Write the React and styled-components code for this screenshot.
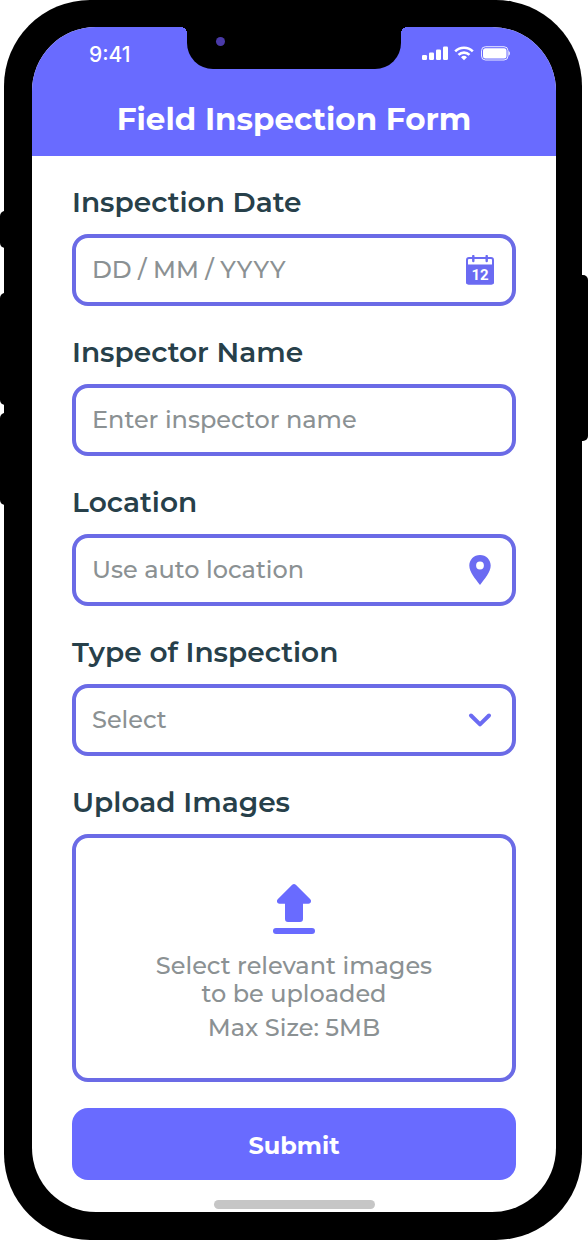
import React, { useState } from "react";
import styled, { createGlobalStyle } from "styled-components";

const GlobalStyle = createGlobalStyle`
  * {
    box-sizing: border-box;
  }
  body {
    margin: 0;
    background: #fff;
    font-family: Montserrat, Inter, sans-serif;
  }
`;

const Device = styled.div`
  position: relative;
  padding: 0 6px 0 4px;
`;

const SideButton = styled.span`
  position: absolute;
  width: 12px;
  top: ${(props) => props.$top}px;
  height: ${(props) => props.$height}px;
  ${(props) => props.$side}: 0;
  border-radius: 5px;
  background: #000;
`;

const Bezel = styled.div`
  position: relative;
  padding: 27px 26px 28px 28px;
  border-radius: 86px;
  background: #000;
`;

const Screen = styled.main`
  position: relative;
  overflow: hidden;
  border-radius: 64px;
  background: #fff;
`;

const Notch = styled.div`
  position: absolute;
  top: 0;
  left: 50%;
  width: 214px;
  height: 42px;
  margin-left: -107px;
  border-radius: 0 0 26px 26px;
  background: #000;
  &:before,
  &:after {
    content: "";
    position: absolute;
    top: 0;
    width: 6px;
    height: 6px;
  }
  &:before {
    right: 100%;
    background: radial-gradient(circle at 0 100%, transparent 6px, #000 6px);
  }
  &:after {
    left: 100%;
    background: radial-gradient(circle at 100% 100%, transparent 6px, #000 6px);
  }
`;

const Camera = styled.span`
  position: absolute;
  top: 10px;
  left: 29px;
  width: 9px;
  height: 9px;
  border-radius: 50%;
  background: #4a3aa8;
`;

const Header = styled.header`
  padding-bottom: 17px;
  background: #696bff;
  color: #fff;
  h1 {
    margin: 0;
    font-size: 31px;
    line-height: 40px;
    font-weight: 700;
    text-align: center;
  }
`;

const StatusBar = styled.div`
  display: flex;
  justify-content: space-between;
  align-items: flex-start;
  height: 72px;
  padding: 16px 46px 0 57px;
  time {
    font-family: Inter, sans-serif;
    font-size: 21px;
    line-height: 24px;
    font-weight: 500;
  }
`;

const StatusIcons = styled.div`
  display: flex;
  gap: 6px;
  padding-top: 3px;
`;

const Form = styled.form`
  display: flex;
  flex-direction: column;
  gap: 30px;
  padding: 30px 40px 20px;
`;

const Field = styled.div`
  display: flex;
  flex-direction: column;
  gap: 16px;
`;

const Label = styled.label`
  color: #27404a;
  font-size: 28px;
  line-height: 32px;
  font-weight: 600;
`;

const Box = styled.div`
  display: flex;
  align-items: center;
  height: 72px;
  padding: 0 18px 0 16px;
  border: 4px solid #6b6be6;
  border-radius: 16px;
  color: #6b6bf2;
  input,
  select {
    flex: 1;
    min-width: 0;
    height: 100%;
    padding: 0 0 2px;
    border: none;
    outline: none;
    appearance: none;
    background: none;
    color: #8b9193;
    font-family: inherit;
    font-size: 24px;
    font-weight: 500;
  }
  input::placeholder {
    color: #8b9193;
    opacity: 1;
  }
  svg {
    flex: none;
    display: block;
  }
`;

const IconButton = styled.button`
  padding: 0;
  border: none;
  background: none;
  color: inherit;
  cursor: pointer;
`;

const UploadBox = styled.label`
  display: flex;
  flex-direction: column;
  align-items: center;
  height: 248px;
  padding-top: 44px;
  border: 4px solid #6b6be6;
  border-radius: 16px;
  color: #8b9193;
  font-size: 24px;
  line-height: 28px;
  font-weight: 500;
  text-align: center;
  cursor: pointer;
  input {
    position: absolute;
    width: 1px;
    height: 1px;
    opacity: 0;
  }
  span {
    max-width: 300px;
    margin-top: 18px;
  }
  small {
    margin-top: 6px;
    font-size: inherit;
  }
`;

const Submit = styled.button`
  height: 72px;
  margin-top: -4px;
  padding-top: 4px;
  border: none;
  border-radius: 16px;
  background: #696bff;
  color: #fff;
  font-family: inherit;
  font-size: 24px;
  font-weight: 700;
  cursor: pointer;
`;

const HomeBar = styled.div`
  width: 161px;
  height: 9px;
  margin: 0 auto 3px;
  border-radius: 5px;
  background: #c6c6c6;
`;

function SignalIcon() {
  return (
    <svg width="26" height="15" viewBox="0 0 26 15" fill="#fff" aria-hidden="true">
      <rect x="0" y="9" width="5" height="5" rx="1.3" />
      <rect x="7" y="6.5" width="5" height="7.5" rx="1.3" />
      <rect x="14" y="3.5" width="5" height="10.5" rx="1.3" />
      <rect x="21" y="0.5" width="5" height="13.5" rx="1.3" />
    </svg>
  );
}

function WifiIcon() {
  return (
    <svg width="20" height="15" viewBox="0 0 20 15" fill="none" stroke="#fff" strokeWidth="2.6" aria-hidden="true">
      <path d="M1.2 5.4a12.6 12.6 0 0 1 17.6 0" />
      <path d="M4.5 8.9a7.9 7.9 0 0 1 11 0" />
      <path d="M10 14.3l-3-3a4.3 4.3 0 0 1 6 0z" fill="#fff" stroke="none" />
    </svg>
  );
}

function BatteryIcon() {
  return (
    <svg width="30" height="15" viewBox="0 0 30 15" aria-hidden="true">
      <rect x="1.5" y="0.7" width="26.5" height="13.3" rx="4" fill="none" stroke="#fff" strokeOpacity="0.85" />
      <rect x="3" y="2.2" width="23.5" height="10.3" rx="2.5" fill="#fff" />
      <path d="M28.6 5v4.6c1-.4 1.2-1.3 1.2-2.3s-.2-1.9-1.2-2.3z" fill="#fff" />
    </svg>
  );
}

function CalendarIcon() {
  return (
    <svg width="28" height="30" viewBox="0 0 28 30" aria-hidden="true">
      <rect x="1" y="3" width="26" height="25.5" rx="2" fill="none" stroke="currentColor" strokeWidth="2" />
      <path d="M0 9.5h28V27a2.500 2.500 0 0 1-2.500 2.500h-23A2.500 2.500 0 0 1 0 27z" fill="currentColor" />
      <path d="M7.3 1v5M20.7 1v5" stroke="currentColor" strokeWidth="2.4" strokeLinecap="round" />
      <text x="14" y="25" textAnchor="middle" fill="#fff" fontFamily="Roboto, sans-serif" fontSize="15" fontWeight="700">
        12
      </text>
    </svg>
  );
}

function PinIcon() {
  return (
    <svg width="28" height="30" viewBox="0 0 28 30" aria-hidden="true">
      <path
        d="M14 0C7.9 0 3.3 4.7 3.3 10.6 3.3 17.5 9.5 24 14 30c4.5-6 10.7-12.5 10.7-19.4C24.7 4.7 20.1 0 14 0zm0 6.600a3.900 3.900 0 1 1 0 7.800 3.900 3.900 0 0 1 0-7.800z"
        fill="currentColor"
      />
    </svg>
  );
}

function ChevronIcon() {
  return (
    <svg width="28" height="30" viewBox="0 0 28 30" fill="none" aria-hidden="true">
      <path d="M5 10.5l9 8.9 9-8.9" stroke="currentColor" strokeWidth="4" strokeLinecap="round" strokeLinejoin="round" />
    </svg>
  );
}

function UploadIcon() {
  return (
    <svg width="42" height="52" viewBox="0 0 42 52" fill="#696bff" aria-hidden="true">
      <path d="M19.2 2.8a2.6 2.6 0 0 1 3.6 0L37.3 17.300c1.500 1.600.6 4.400-1.800 4.400H30V37a3 3 0 0 1-3 3H15a3 3 0 0 1-3-3V21.700H6.500c-2.400 0-3.300-2.800-1.800-4.400z" />
      <rect x="0" y="46" width="42" height="6" rx="3" />
    </svg>
  );
}

function App() {
  const [date, setDate] = useState("");
  const [name, setName] = useState("");
  const [location, setLocation] = useState("");
  const [type, setType] = useState("");

  return (
    <>
      <GlobalStyle />
      <Device>
        <SideButton $side="left" $top={211} $height={37} />
        <SideButton $side="left" $top={293} $height={112} />
        <SideButton $side="left" $top={413} $height={92} />
        <SideButton $side="right" $top={275} $height={166} />
        <Bezel>
          <Screen>
            <Header>
              <StatusBar>
                <time>9:41</time>
                <StatusIcons>
                  <SignalIcon />
                  <WifiIcon />
                  <BatteryIcon />
                </StatusIcons>
              </StatusBar>
              <h1>Field Inspection Form</h1>
            </Header>
            <Notch>
              <Camera />
            </Notch>
            <Form onSubmit={(e) => e.preventDefault()}>
              <Field>
                <Label htmlFor="date">Inspection Date</Label>
                <Box>
                  <input id="date" type="text" placeholder="DD / MM / YYYY" value={date} onChange={(e) => setDate(e.target.value)} />
                  <IconButton type="button" aria-label="Choose date">
                    <CalendarIcon />
                  </IconButton>
                </Box>
              </Field>
              <Field>
                <Label htmlFor="name">Inspector Name</Label>
                <Box>
                  <input id="name" type="text" placeholder="Enter inspector name" value={name} onChange={(e) => setName(e.target.value)} />
                </Box>
              </Field>
              <Field>
                <Label htmlFor="location">Location</Label>
                <Box>
                  <input id="location" type="text" placeholder="Use auto location" value={location} onChange={(e) => setLocation(e.target.value)} />
                  <IconButton type="button" aria-label="Use current location">
                    <PinIcon />
                  </IconButton>
                </Box>
              </Field>
              <Field>
                <Label htmlFor="type">Type of Inspection</Label>
                <Box>
                  <select id="type" value={type} onChange={(e) => setType(e.target.value)}>
                    <option value="">Select</option>
                  </select>
                  <ChevronIcon />
                </Box>
              </Field>
              <Field>
                <Label htmlFor="images">Upload Images</Label>
                <UploadBox>
                  <input id="images" type="file" accept="image/*" multiple />
                  <UploadIcon />
                  <span>Select relevant images to be uploaded</span>
                  <small>Max Size: 5MB</small>
                </UploadBox>
              </Field>
              <Submit type="submit">Submit</Submit>
            </Form>
            <HomeBar />
          </Screen>
        </Bezel>
      </Device>
    </>
  );
}

export default App;
